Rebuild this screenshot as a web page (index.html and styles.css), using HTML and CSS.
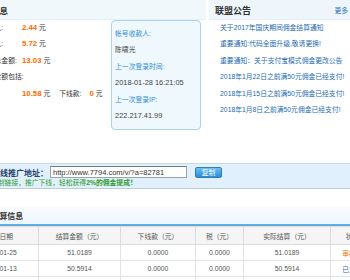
FILE: index.html
```html
<!DOCTYPE html>
<html lang="zh-CN">
<head>
    <meta charset="UTF-8">
    <meta name="viewport" content="width=device-width, initial-scale=1.0">
    <title>推广中心</title>
    <link rel="stylesheet" href="styles.css">
</head>
<body>
    <div class="page">
        <div class="top">
            <div class="account">
                <div class="panel-head"><h3>我的账户信息</h3></div>
                <div class="account-body">
                    <div class="stats">
                        <div class="stat"><span class="label">本月推广佣金收入:</span><span class="value"><b>2.44</b> 元</span></div>
                        <div class="stat"><span class="label">上月推广佣金收入:</span><span class="value"><b>5.72</b> 元</span></div>
                        <div class="stat"><span class="label">累计可结算佣金总金额:</span><span class="value"><b>13.03</b> 元</span></div>
                        <div class="stat"><span class="label wide">其中可结算佣金金额包括:</span></div>
                        <div class="stat"><span class="label">直接佣金:</span><span class="value"><b>10.58</b> 元<span class="sub">下线款:</span><b>0</b> 元</span></div>
                    </div>
                    <div class="login-box">
                        <p class="key">帐号收款人:</p>
                        <p>陈啸光</p>
                        <p class="key">上一次登录时间:</p>
                        <p class="num">2018-01-28 16:21:05</p>
                        <p class="key">上一次登录IP:</p>
                        <p class="num">222.217.41.99</p>
                    </div>
                </div>
            </div>
            <div class="notice">
                <div class="panel-head"><h3>联盟公告</h3><a class="more">更多</a></div>
                <ul>
                    <li>关于2017年国庆期间佣金结算通知</li>
                    <li>重要通知:代码全面升级,敬请更换!</li>
                    <li>重要通知：关于支付宝模式佣金更改公告</li>
                    <li>2018年1月22日之前满50元佣金已经支付!</li>
                    <li>2018年1月15日之前满50元佣金已经支付!</li>
                    <li>2018年1月8日之前满50元佣金已经支付!</li>
                </ul>
            </div>
        </div>

        <div class="promo">
            <div class="promo-row">
                <span class="promo-label">在线推广地址：</span>
                <input class="url" value="http://www.7794.com/v/?a=82781">
                <div class="copy-btn">复制</div>
            </div>
            <p class="promo-tip">复制链接，推广下线，轻松获得<b>2%的佣金提成！</b></p>
        </div>

        <div class="settle">
            <div class="settle-head"><h3>结算信息</h3></div>
            <table>
                <colgroup>
                    <col style="width:78px"><col style="width:82px"><col style="width:75px">
                    <col style="width:48px"><col style="width:87px"><col style="width:44px">
                </colgroup>
                <tr>
                    <th>结算日期</th><th>结算金额（元）</th><th>下线款（元）</th>
                    <th>税（元）</th><th>实际结算（元）</th><th>状态</th>
                </tr>
                <tr>
                    <td>2018-01-25</td><td>51.0189</td><td>0.0000</td>
                    <td>0.0000</td><td>51.0189</td><td class="pending">审核中</td>
                </tr>
                <tr>
                    <td>2018-01-13</td><td>50.5914</td><td>0.0000</td>
                    <td>0.0000</td><td>50.5914</td><td class="paid">已支付</td>
                </tr>
                <tr>
                    <td>2017-12-25</td><td>48.2210</td><td>0.0000</td>
                    <td>0.0000</td><td>48.2210</td><td class="paid">已支付</td>
                </tr>
            </table>
        </div>
    </div>
</body>
</html>
```
FILE: styles.css
```css
*{
    margin: 0;
    padding: 0;
    box-sizing: border-box;
}
body{
    width: 350px;
    height: 280px;
    overflow: hidden;
    background: #fff;
    color: #333;
    font-family: "Liberation Sans", "Noto Sans CJK SC", sans-serif;
    font-size: 6.8px;
}
/* page is scrolled sideways, left part hidden */
.page{
    width: 420px;
    margin-left: -60px;
}
.top{
    display: flex;
    height: 163px;
}
.panel-head{
    display: flex;
    align-items: center;
    height: 19.5px;
    padding-top: 2px;
    background: #f1f8fc;
    border-bottom: 1px solid #e3eef5;
}
.panel-head h3{
    font-size: 8.5px;
    color: #333;
}
.account{
    width: 268px;
}
.account .panel-head{
    padding-left: 17px;
}
.account-body{
    display: flex;
    justify-content: space-between;
}
.stats{
    padding-left: 7px;
}
.stat{
    display: flex;
    height: 16.5px;
    line-height: 16.5px;
    white-space: nowrap;
}
.stat .label{
    width: 75px;
}
.stat .label.wide{
    width: auto;
}
.stat .value b{
    color: #ff6a00;
    font-size: 7.8px;
}
.stat .sub{
    margin: 0 8px 0 9px;
}
.login-box{
    width: 90px;
    height: 110.5px;
    margin-right: 5px;
    padding: 5.5px 3px;
    background: #eef8fd;
    border: 1px solid #a9d4ea;
    border-radius: 4px;
    white-space: nowrap;
}
.login-box p{
    line-height: 16.4px;
    color: #444;
}
.login-box .key{
    color: #2f8fd0;
}
.login-box .num{
    font-size: 7.4px;
}
.notice{
    width: 152px;
    margin-left: 3px;
}
.notice .panel-head{
    justify-content: space-between;
    padding: 2px 12px 0 6px;
    background: #eef6fb;
}
.notice .panel-head h3{
    font-size: 9px;
}
.notice .more{
    color: #2a6fb4;
}
.notice ul{
    list-style: none;
    padding-left: 11px;
}
.notice li{
    line-height: 16.5px;
    color: #1d6bb0;
    white-space: nowrap;
}
.promo{
    height: 26px;
    padding: 2px 0 0 52px;
    background: #e1f0fb;
    border-top: 1px solid #c7d9e6;
    border-bottom: 1px solid #b8cede;
}
.promo-row{
    display: flex;
    align-items: center;
    height: 12px;
}
.promo-label{
    width: 58px;
    font-size: 8px;
    font-weight: bold;
    color: #24466f;
    white-space: nowrap;
}
.url{
    width: 137px;
    height: 12px;
    padding-left: 2px;
    border: 1px solid #98a4ae;
    border-top-color: #6f7b86;
    background: #fff;
    color: #333;
    font: 7.5px "Liberation Sans", sans-serif;
    outline: none;
}
.copy-btn{
    width: 27px;
    height: 11px;
    margin-left: 8px;
    line-height: 9px;
    text-align: center;
    color: #fff;
    background: linear-gradient(#6cc0f0, #2b8cd3);
    border: 1px solid #2b7fbf;
    border-radius: 2px;
}
.promo-tip{
    margin-left: -1px;
    line-height: 10px;
    color: #2f9a2f;
    white-space: nowrap;
}
.settle{
    margin-top: 18px;
}
.settle-head{
    display: flex;
    align-items: center;
    height: 19px;
    padding-left: 51.5px;
    background: linear-gradient(#f7fbfe, #eef7fd);
    border-bottom: 2px solid #5eaee3;
}
.settle table{
    margin-left: 20px;
    width: 414px;
    table-layout: fixed;
    border-collapse: collapse;
}
.settle th{
    height: 18px;
    font-weight: normal;
    color: #555;
    background: #f5f5f5;
    border: 1px solid #dcdcdc;
    white-space: nowrap;
}
.settle td{
    height: 16px;
    text-align: center;
    color: #555;
    border: 1px solid #e2e2e2;
    white-space: nowrap;
}
.settle .pending{
    color: #ff6a00;
}
.settle .paid{
    color: #1d6bb0;
}
```
